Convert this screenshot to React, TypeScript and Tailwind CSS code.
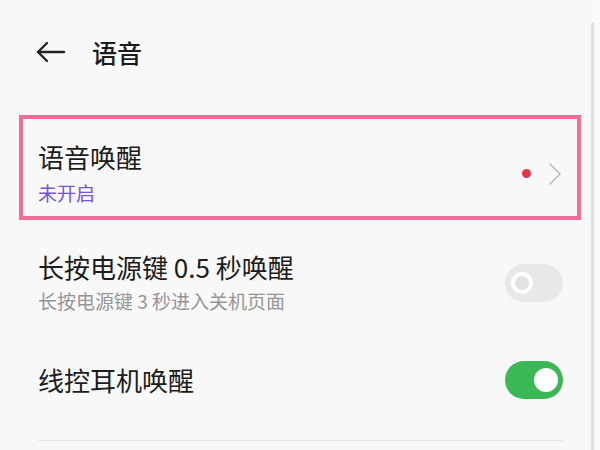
import React from 'react'

const FONT = { fontFamily: '"Noto Sans CJK SC", "Noto Sans", sans-serif' }

function Toggle({ on }: { on: boolean }) {
  if (on) {
    return (
      <div className="w-[58px] h-[38px] rounded-full bg-[#3cb755] flex items-center justify-end pr-[5px] shrink-0">
        <div className="w-[24px] h-[24px] rounded-full bg-white" />
      </div>
    )
  }
  return (
    <div className="w-[58px] h-[38px] rounded-full bg-[#e8e8e8] flex items-center pl-[6px] shrink-0">
      <div className="w-[22px] h-[22px] rounded-full border-[4px] border-white bg-[#e2e2e2]" />
    </div>
  )
}

export default function App() {
  return (
    <div className="w-[600px] h-[450px] overflow-hidden bg-[#f8f8f8] flex text-[#1c1c1c]" style={FONT}>
      <div className="w-[591px] flex flex-col">
        {/* Header */}
        <div className="h-[104px] flex items-center pl-[36px] shrink-0">
          <svg width="30" height="22" viewBox="0 0 30 22" fill="none" stroke="#222" strokeWidth="2.4" strokeLinecap="round" strokeLinejoin="round">
            <path d="M2 11H28" />
            <path d="M11 2L2 11L11 20" />
          </svg>
          <span className="ml-[26px] text-[25px] leading-[34px] font-medium">语音</span>
        </div>

        {/* Voice wake row (highlighted) */}
        <div className="mt-[11px] ml-[19px] mr-[10px] h-[105px] border-[4px] border-[#f06d96] flex items-center justify-between pl-[15px] pr-[15px] pt-[12px] shrink-0">
          <div className="flex flex-col">
            <span className="text-[26px] leading-[34px]">语音唤醒</span>
            <span className="mt-[5px] text-[19px] leading-[28px] text-[#7b52d9]">未开启</span>
          </div>
          <div className="flex items-center">
            <div className="w-[9px] h-[9px] rounded-full bg-[#e3344c]" />
            <svg className="ml-[17px]" width="14" height="24" viewBox="0 0 14 24" fill="none" stroke="#bdbdbd" strokeWidth="1.6" strokeLinecap="round" strokeLinejoin="round">
              <path d="M2 2L12 12L2 22" />
            </svg>
          </div>
        </div>

        {/* Power key row */}
        <div className="flex items-center justify-between pl-[38px] pr-[28px] pt-[30px] pb-[20px]">
          <div className="flex flex-col">
            <span className="text-[26px] leading-[34px]">长按电源键 0.5 秒唤醒</span>
            <span className="mt-[3px] text-[19px] leading-[28px] text-[#959595]">长按电源键 3 秒进入关机页面</span>
          </div>
          <Toggle on={false} />
        </div>

        {/* Wired headset row */}
        <div className="h-[90px] flex items-center justify-between pl-[38px] pr-[28px]">
          <span className="text-[26px] leading-[34px]">线控耳机唤醒</span>
          <Toggle on />
        </div>

        <div className="mt-[15px] ml-[38px] mr-[28px] h-[1px] bg-[#e6e6e6]" />
      </div>
      <div className="w-[3px] mt-[23px] bg-[#e0e0e0]" />
      <div className="flex-1 bg-[#fafafa]" />
    </div>
  )
}
